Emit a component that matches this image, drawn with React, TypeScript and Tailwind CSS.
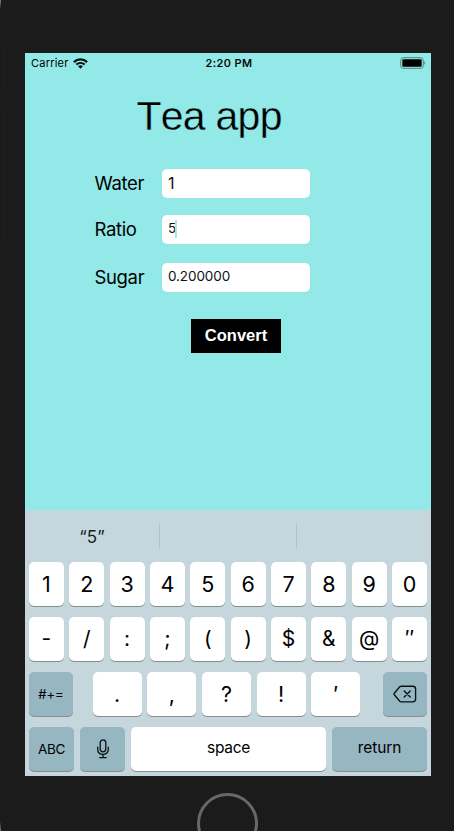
import type { ReactNode } from "react";

const digits = ["1", "2", "3", "4", "5", "6", "7", "8", "9", "0"];
const symbols = ["-", "/", ":", ";", "(", ")", "$", "&", "@", "″"];
const punctuation = [".", ",", "?", "!", "′"];

function Key({ children, className = "" }: { children: ReactNode; className?: string }) {
  return (
    <div
      className={`flex h-11 items-center justify-center rounded-[5px] text-black shadow-[0_1px_0_#858d91] ${className}`}
    >
      {children}
    </div>
  );
}

function Field({ label, value, className = "", active = false }: { label: string; value: string; className?: string; active?: boolean }) {
  return (
    <div className="flex items-center">
      <label className="w-[67px] text-[18.5px] leading-[29px] tracking-[-0.35px]">{label}</label>
      <div className={`flex h-[29px] w-[148px] items-center rounded-[5px] bg-white pb-px pl-[6.5px] text-[#111] shadow-[0_0_1px_#b4caca] ${className}`}>
        <span>{value}</span>
        {active && <span className="-ml-px h-[18px] w-[2px] bg-[#a4e9e7]" />}
      </div>
    </div>
  );
}

function WifiIcon() {
  return (
    <svg className="ml-[4px] h-[11px] w-[15px]" viewBox="0 0 15 11" fill="none" stroke="#06100f">
      <path d="M.9 4.1C4.6.5 10.4.5 14.1 4.1" strokeWidth="2.2" />
      <path d="M3.3 6.6c2.4-2.2 6-2.2 8.4 0" strokeWidth="2" />
      <path d="M5.1 8.2c1.4-1.2 3.4-1.2 4.8 0L7.5 10.7Z" fill="#06100f" stroke="none" />
    </svg>
  );
}

function BatteryIcon() {
  return (
    <svg className="h-3 w-[26px]" viewBox="0 0 26 12">
      <rect x=".7" y=".7" width="22.6" height="10.6" rx="2.7" fill="none" stroke="#54827f" />
      <rect x="2.3" y="2.3" width="19.4" height="7.4" rx="1.2" fill="#000" />
      <path d="M24.4 4.2c1.4.6 1.4 3 0 3.6Z" fill="#54827f" />
    </svg>
  );
}

function MicIcon() {
  return (
    <svg className="h-5 w-[14px]" viewBox="0 0 14 20" fill="none" stroke="#0b1113" strokeWidth="1.3" strokeLinecap="round">
      <rect x="4.2" y=".9" width="5.6" height="12" rx="2.8" />
      <path d="M1.7 8.2v2.1c0 3.2 2 5.1 5.3 5.1s5.3-1.9 5.3-5.1V8.2M7 15.4v3M3.7 18.6h6.6" />
    </svg>
  );
}

function DeleteIcon() {
  return (
    <svg className="h-[18px] w-6" viewBox="0 0 24 18" fill="none" stroke="#0b1113" strokeWidth="1.35" strokeLinecap="round" strokeLinejoin="round">
      <path d="M8.2 1.2h11.6q2.8 0 2.8 2.8v10q0 2.8-2.8 2.8H8.2q-.8 0-1.4-.6L1.5 10q-.9-1 0-2l5.3-6.2q.6-.6 1.4-.6Z" />
      <path d="m11.2 6 6 6m0-6-6 6" />
    </svg>
  );
}

export default function App() {
  return (
    <div className="relative h-[831px] w-[454px] overflow-hidden bg-[#1b1b1b] pl-[25px] pt-[53px] font-['Inter','Liberation_Sans',sans-serif] text-black">
      <div className="absolute left-0 top-0 h-[9px] w-px bg-linear-to-b from-[#888] to-[#1b1b1b]" />
      <div className="absolute left-[3px] top-[51px] h-[34px] w-px bg-[#202020]" />
      <div className="absolute left-[3px] top-[114px] h-[124px] w-px bg-[#202020]" />
      <div className="absolute bottom-0 left-0 h-[10px] w-px bg-linear-to-t from-[#777] to-[#1b1b1b]" />

      <div className="flex h-[723px] w-[406px] flex-col bg-[#93e9e7]">
        <div className="grid h-5 grid-cols-3 items-center text-[11px]">
          <div className="flex items-center pl-[6px] tracking-[0.22px]">
            Carrier
            <WifiIcon />
          </div>
          <div className="pl-[2px] text-center font-medium tracking-[0.4px] [-webkit-text-stroke:0.15px_black]">2:20 PM</div>
          <div className="flex justify-end pr-[5px]">
            <BatteryIcon />
          </div>
        </div>

        <h1 className="mt-[18.5px] pl-[111.5px] font-['Liberation_Sans',sans-serif] text-[41px] leading-[48px] tracking-[-0.75px] [font-kerning:none] [-webkit-text-stroke:0.35px_#93e9e7]">Tea app</h1>

        <div className="mt-[29px] pl-[69.5px]">
          <Field label="Water" value="1" className="text-[16px]" />
          <div className="mt-[17px]">
            <Field label="Ratio" value="5" className="text-[13.5px]" active />
          </div>
          <div className="mt-[19px]">
            <Field label="Sugar" value="0.200000" className="text-[13.5px] tracking-[-0.1px]" />
          </div>
        </div>
        <button className="ml-[166px] mt-[27px] h-[34px] w-[90px] bg-black font-['Liberation_Sans',sans-serif] text-[16.5px] font-bold text-white">
          Convert
        </button>

        <div className="mt-auto h-[266.5px] bg-[#c5d6dd] px-1">
          <div className="flex h-[52.5px] items-center">
            <div className="w-[126px] pt-[3px] text-center text-[17px] text-[#171d20]">“5”</div>
            <div className="ml-[3.5px] h-6 w-px bg-[#b1c1c8]" />
            <div className="ml-[136px] h-6 w-px bg-[#b1c1c8]" />
          </div>
          <div className="flex flex-col gap-[11px]">
            <div className="grid grid-cols-10 gap-[5.5px]">
              {digits.map((key) => (
                <Key key={key} className="bg-white text-[21.5px]">{key}</Key>
              ))}
            </div>
            <div className="grid grid-cols-10 gap-[5.5px]">
              {symbols.map((key) => (
                <Key key={key} className="bg-white text-[21px]">{key}</Key>
              ))}
            </div>
            <div className="flex justify-between">
              <Key className="w-11 bg-[#96b6c1] pt-[2px] text-[13px]">#+=</Key>
              <div className="flex gap-[5.5px]">
                {punctuation.map((key) => (
                  <Key key={key} className="w-[49.2px] bg-white text-[21.5px]">{key}</Key>
                ))}
              </div>
              <Key className="ml-[3px] w-11 bg-[#96b6c1]"><DeleteIcon /></Key>
            </div>
            <div className="flex gap-[6px]">
              <Key className="w-[45px] bg-[#96b6c1] text-[13.5px] tracking-[-0.3px]">ABC</Key>
              <Key className="w-[45px] bg-[#96b6c1]"><MicIcon /></Key>
              <Key className="w-[195px] bg-white pb-[2px] text-[15.5px] tracking-[-0.3px]">space</Key>
              <Key className="w-[95px] bg-[#96b6c1] pb-[2px] text-[15.5px] tracking-[-0.1px]">return</Key>
            </div>
          </div>
        </div>
      </div>

      <div className="ml-[172px] mt-[17px] size-[61px] rounded-full border-[3px] border-[#686868]" />
    </div>
  );
}
